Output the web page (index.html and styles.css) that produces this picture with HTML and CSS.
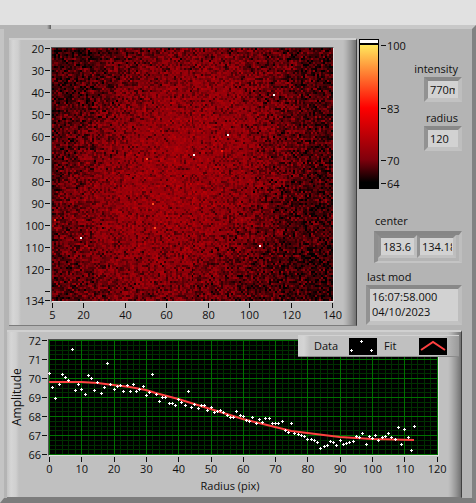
FILE: index.html
```html
<!DOCTYPE html>
<html lang="en">
<head>
<meta charset="utf-8">
<title>Beam profile</title>
<link rel="stylesheet" href="styles.css">
</head>
<body>
<header class="strip"></header>
<main class="window">
  <section class="upper">
    <div class="panel heat">
      <svg class="axis-y" id="heat-y" role="img" aria-label="Row axis"></svg>
      <canvas class="map" id="map" width="141" height="127"></canvas>
      <svg class="axis-x" id="heat-x" role="img" aria-label="Column axis"></svg>
    </div>
    <div class="side">
      <div class="readings">
        <svg class="ramp" width="56" height="152" role="img" aria-label="Colour scale">
          <defs>
            <linearGradient id="scale" x1="0" y1="0" x2="0" y2="1">
              <stop offset="0" stop-color="#ffe85c"/>
              <stop offset="0.44" stop-color="#ff0000"/>
              <stop offset="0.8" stop-color="#80000c"/>
              <stop offset="0.96" stop-color="#000"/>
            </linearGradient>
          </defs>
          <rect x="2" y="1" width="20" height="150"/>
          <rect x="3" y="2" width="18" height="3" fill="#fff"/>
          <rect x="3" y="7" width="18" height="143" fill="url(#scale)"/>
          <path class="tick" d="M24 7.5h5M24 70.5h5M24 122.5h5M24 145.5h5"/>
          <text x="30" y="12">100</text>
          <text x="30" y="75">83</text>
          <text x="30" y="127">70</text>
          <text x="30" y="150">64</text>
        </svg>
        <div class="fields">
          <label for="intensity">intensity</label>
          <input class="sunk" id="intensity" readonly value="770m">
          <label for="radius">radius</label>
          <input class="sunk" id="radius" readonly value="120">
        </div>
      </div>
      <label class="center-label" for="cx">center</label>
      <div class="cluster">
        <input class="sunk" id="cx" readonly value="183.6">
        <input class="sunk" id="cy" aria-label="center y" readonly value="134.18">
      </div>
      <label class="mod-label" for="mod">last mod</label>
      <textarea class="sunk stamp" id="mod" readonly rows="2">16:07:58.000
04/10/2023</textarea>
    </div>
  </section>

  <section class="panel profile">
    <div class="title-y">Amplitude</div>
    <svg class="axis-y" id="profile-y" role="img" aria-label="Amplitude axis"></svg>
    <svg class="plot" id="plot" viewBox="0 0 389 115" preserveAspectRatio="none" role="img" aria-label="Amplitude against radius"></svg>
    <svg class="axis-x" id="profile-x" role="img" aria-label="Radius axis"></svg>
    <div class="title-x">Radius (pix)</div>
    <div class="legend">
      <span>Data</span>
      <svg width="28" height="17"><rect width="28" height="17"/><path class="dots" d="M1 12.5h3M2.5 11v3M11 3.5h3M12.5 2v3M21 12.5h3M22.5 11v3"/></svg>
      <span class="fit-name">Fit</span>
      <svg width="28" height="17"><rect width="28" height="17"/><path class="fit" d="M2 12L14 4L26 12"/></svg>
    </div>
  </section>
</main>
<script src="plot.js"></script>
</body>
</html>
```
FILE: styles.css
```css
* { box-sizing: border-box; }

body {
  margin: 0;
  background: #b4b4b4;
  color: #101010;
  font: 11px/16px "Open Sans", "Noto Sans", sans-serif;
}

.strip { height: 25px; background: #e1e1e1; }

.window {
  position: relative;
  border: solid;
  border-width: 4px 4px 5px;
  border-color: #c8c8c8 #828282 #7c7c7c #c4c4c4;
}

.window::before {
  content: "";
  position: absolute;
  left: -4px;
  top: -4px;
  width: 51px;
  height: 4px;
  background: linear-gradient(90deg, #b4b4b4 47px, #5c5c5c);
}

.upper { display: flex; padding: 9px 10px 0 5px; }

.panel {
  position: relative;
  display: grid;
  border: solid;
  border-width: 2px 1px 1px 0;
  border-color: #d0d0d0 #404040 #7c7c7c;
  background:
    linear-gradient(90deg, #c4c4c4, #d6d6d6 4px, #cfcfcf 9px, #c0c0c0 12px, transparent 13px),
    linear-gradient(270deg, #727272, #969696 5px, #b4b4b4 10px, #c0c0c0 13px);
}

.heat {
  flex: 1;
  grid-template-columns: 42px 1fr 22px;
  grid-template-rows: 255px 23px;
  padding-top: 7px;
}

svg { display: block; overflow: visible; }
text { fill: #101010; }
.tick { stroke: #101010; fill: none; shape-rendering: crispEdges; }
.axis-x, .axis-y { width: 100%; height: 100%; }
.axis-x { grid-column: 2; }
.axis-y text { text-anchor: end; }
.axis-x text { text-anchor: middle; }

.map, .plot {
  width: 100%;
  height: 100%;
  border: 1px solid;
  border-color: #505050 #e0e0e0 #e0e0e0 #505050;
}

.map { image-rendering: pixelated; background: #400004; }

.side { width: 105px; display: flex; flex-direction: column; align-items: flex-end; }
.readings { width: 100%; display: flex; justify-content: space-between; height: 152px; }
.fields { display: flex; flex-direction: column; align-items: flex-end; padding-top: 23px; }
.fields label { padding-right: 4px; }
.fields .sunk { margin-bottom: 8px; }

.sunk {
  width: 38px;
  height: 25px;
  margin: 0;
  padding: 0 3px 0 2px;
  border: 4px solid;
  border-color: #888 #bebebe #c2c2c2 #929292;
  border-radius: 0;
  background: #d2d2d2;
  color: inherit;
  font: inherit;
  outline: 0;
}

.center-label { width: 87px; margin-top: 23px; }

.cluster {
  display: flex;
  width: 88px;
  height: 32px;
  margin: 2px 0 6px;
  padding: 0 3px 3px 0;
  border: solid;
  border-width: 4px 3px 2px 4px;
  border-color: #868686 #bebebe #c4c4c4 #8e8e8e;
}

.cluster .sunk { flex: 1; width: 0; height: 100%; border-width: 3px; padding-right: 1px; }
.mod-label { width: 95px; }

.stamp {
  width: 96px;
  height: 40px;
  line-height: 15px;
  resize: none;
  overflow: hidden;
}

.profile {
  grid-template-columns: 18px 23px 1fr 22px;
  grid-template-rows: 117px 22px 19px;
  margin: 4px 10px 0 3px;
  padding-top: 7px;
}

.profile .axis-x { grid-column: 3; }
.plot { background: #000; }
.title-y {
  writing-mode: vertical-rl;
  transform: rotate(180deg);
  text-align: center;
  padding-right: 2px;
  font-size: 12px;
}
.title-x { grid-column: 3; text-align: center; padding-right: 27px; }

.major, .minor { fill: none; stroke: #007000; shape-rendering: crispEdges; }
.minor { stroke: #003000; }
.dots { fill: none; stroke: #fff; shape-rendering: crispEdges; }
.fit { fill: none; stroke: #ff4040; stroke-width: 2; }

.legend {
  position: absolute;
  top: 3px;
  right: 2px;
  width: 161px;
  height: 22px;
  padding: 0 11px 0 16px;
  display: flex;
  align-items: center;
  border-top: 1px solid #d2d2d2;
  border-bottom: 1px solid #8c8c8c;
  background: linear-gradient(90deg, #d0d0d0, #d4d4d4 6px, #c0c0c0 12px, #c0c0c0 146px, #9a9a9a);
}
.legend span { width: 35px; }
.legend .fit-name { margin-left: 7px; }
```
FILE: plot.js
```js
const NS = "http://www.w3.org/2000/svg";

function add(parent, tag, attrs, text) {
  const el = document.createElementNS(NS, tag);
  for (const k in attrs) el.setAttribute(k, attrs[k]);
  if (text !== undefined) el.textContent = text;
  parent.appendChild(el);
}

// Ticks sit at a share of the axis length; an empty label draws the tick alone.
function axisX(id, length, ticks) {
  const svg = document.getElementById(id);
  for (const [pos, label] of ticks) {
    const x = (pos / length * 100) + "%";
    add(svg, "line", { class: "tick", x1: x, x2: x, y1: 1, y2: 6 });
    add(svg, "text", { x, y: 17 }, label);
  }
}

function axisY(id, width, ticks) {
  const svg = document.getElementById(id);
  for (const [y, label] of ticks) {
    add(svg, "line", { class: "tick", x1: width - 6, x2: width - 1, y1: y, y2: y });
    add(svg, "text", { x: width - 7, y: y + 4 }, label);
  }
}

axisY("heat-y", 42, [[1.5, 20], [23.5, 30], [45.5, 40], [67.5, 50], [89.5, 60],
  [112.5, 70], [134.5, 80], [156.5, 90], [178.5, 100], [200.5, 110],
  [222.5, 120], [244.5, ""], [253.5, 134]]);
axisX("heat-x", 283, [[1.5, 5], [32.5, 20], [74.5, 40], [115.5, 60],
  [157.5, 80], [198.5, 100], [240.5, 120], [281.5, 140]]);
axisY("profile-y", 23, [72, 71, 70, 69, 68, 67, 66].map((v, i) => [1.5 + i * 19, v]));
axisX("profile-x", 391, Array.from({ length: 13 }, (_, i) => [1.5 + i * 32.3, i * 10]));

// Heat map: broad tilted spot over detector noise
let seed = 20231004;
function rand() {
  seed = (Math.imul(seed, 1664525) + 1013904223) >>> 0;
  return seed / 4294967296;
}
function noise() {
  return (rand() + rand() + rand() + rand() - 2) * 1.73;
}
const stops = [[64, 0, 0, 0], [70, 146, 0, 10], [83, 255, 0, 0], [100, 255, 232, 92]];
function colour(v) {
  if (v <= stops[0][0]) return [0, 0, 0];
  for (let i = 1; i < stops.length; i++) {
    const a = stops[i - 1], b = stops[i];
    if (v <= b[0]) {
      const t = (v - a[0]) / (b[0] - a[0]);
      return [1, 2, 3].map(k => a[k] + (b[k] - a[k]) * t);
    }
  }
  return [255, 255, 255];
}
const canvas = document.getElementById("map");
const ctx = canvas.getContext("2d");
const image = ctx.createImageData(141, 127);
for (let y = 0; y < 127; y++) {
  for (let x = 0; x < 141; x++) {
    const dy = y - 62;
    const dx = x - 62 + dy * 0.22;
    const r2 = dx * dx + dy * dy / 1.8;
    const c = colour(66 + 5 * Math.exp(-Math.pow(r2 / 3300, 1.3)) + noise() * 1.8);
    image.data.set([c[0], c[1], c[2], 255], (y * 141 + x) * 4);
  }
}
ctx.putImageData(image, 0, 0);
const hot = [["#fff", 88, 43], ["#fff", 71, 53], ["#fff", 111, 23], ["#fff", 14, 95],
  ["#fff", 104, 99], ["#ff5020", 47, 55], ["#ff5020", 50, 78],
  ["#ff5020", 51, 90], ["#ff2010", 1, 86], ["#ff2010", 85, 51]];
for (const [c, x, y] of hot) {
  ctx.fillStyle = c;
  ctx.fillRect(x, y, 1, 1);
}

// Profile plot
const plot = document.getElementById("plot");
const step = 3.23;
let minor = "", major = "";
for (let i = 0; i <= 60; i++) {
  const d = `M${Math.round(i * 2 * step) + 0.5} 0V115`;
  if (i % 5) minor += d; else major += d;
}
for (let i = 0; i <= 24; i++) {
  const d = `M0 ${Math.round(i * 4.75) + 0.5}H389`;
  if (i % 4) minor += d; else major += d;
}
add(plot, "path", { class: "minor", d: minor });
add(plot, "path", { class: "major", d: major });

const fit = [[0, 42], [10, 42], [15, 43], [20, 45], [25, 47], [30, 50], [33, 53], [40, 59],
  [45, 64], [50, 69], [55, 74], [60, 79], [65, 83], [70, 87], [75, 91], [80, 93],
  [85, 95], [90, 97], [100, 99], [113, 100]];
add(plot, "polyline", { class: "fit", points: fit.map(([r, y]) => `${r * step},${y}`).join(" ") });

// One sample per radius, as rows below the top of the plot
const samples = [33, 47, 58, 44, 34, 37, 40, 9, 50, 44, 49, 54, 35, 38, 50, 42, 53, 47, 23, 44,
  49, 46, 45, 51, 45, 51, 44, 51, 49, 46, 55, 52, 34, 54, 61, 57, 57, 63, 63, 65,
  59, 62, 65, 51, 67, 64, 68, 65, 65, 70, 67, 72, 71, 70, 72, 75, 77, 77, 71, 75,
  76, 80, 81, 77, 83, 79, 82, 78, 78, 83, 83, 83, 81, 90, 92, 83, 93, 94, 95, 96,
  99, 99, 100, 102, 108, 106, 105, 101, 102, 105, 100, 104, 103, 102, 101, 96, 97, 93, 104, 96,
  98, 95, 100, 97, 96, 93, 97, 99, 87, 104, 89, 97, 110, 86];
const marks = samples.map((y, r) => {
  const x = Math.round(r * step);
  return `M${x - 1} ${y + 0.5}h3M${x + 0.5} ${y - 1}v3`;
}).join("");
add(plot, "path", { class: "dots", d: marks });
```
